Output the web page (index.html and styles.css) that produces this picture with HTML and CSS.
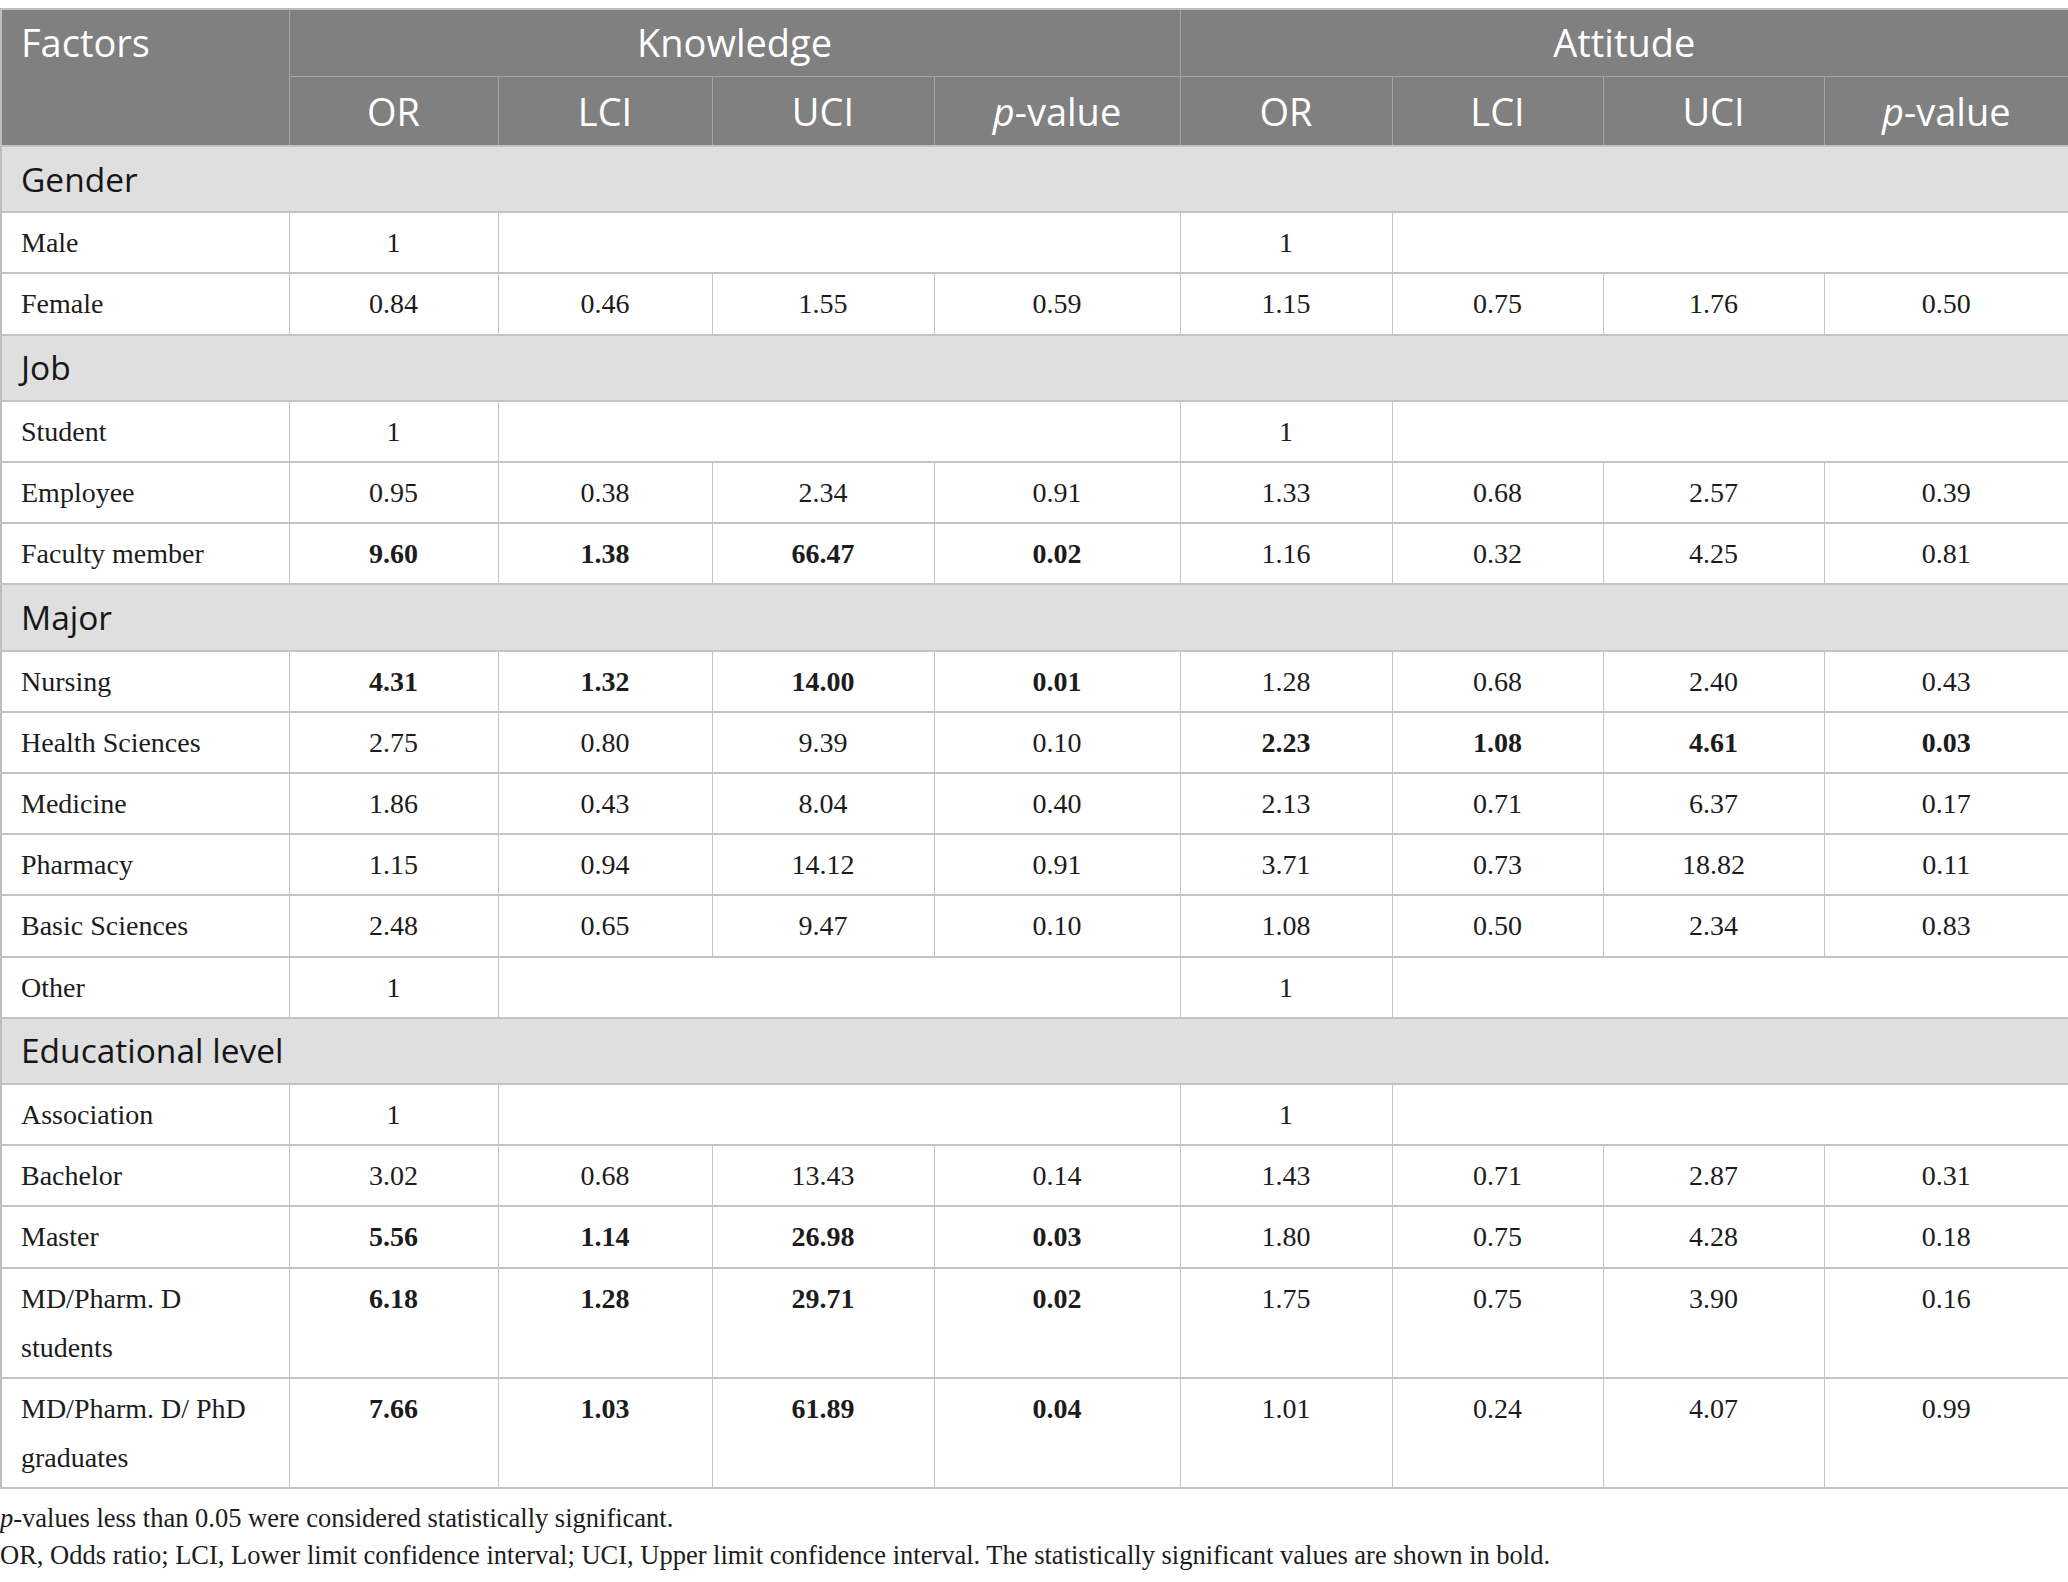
FILE: index.html
```html
<!DOCTYPE html>
<html lang="en">
<head>
<meta charset="utf-8">
<title>Table</title>
<link rel="stylesheet" href="styles.css">
</head>
<body>
<div class="page">
<table class="data">
  <colgroup>
    <col class="c-factor">
    <col class="c-or">
    <col class="c-lci">
    <col class="c-uci">
    <col class="c-p">
    <col class="c-or2">
    <col class="c-lci2">
    <col class="c-uci2">
    <col class="c-p2">
  </colgroup>
  <thead>
    <tr class="h1">
      <th class="factors" rowspan="2">Factors</th>
      <th colspan="4">Knowledge</th>
      <th colspan="4">Attitude</th>
    </tr>
    <tr class="h2">
      <th>OR</th><th>LCI</th><th>UCI</th><th><i>p</i>-value</th>
      <th>OR</th><th>LCI</th><th>UCI</th><th><i>p</i>-value</th>
    </tr>
  </thead>
  <tbody>
    <tr class="group"><td colspan="9">Gender</td></tr>
    <tr><td class="lbl">Male</td><td>1</td><td colspan="3"></td><td>1</td><td colspan="3"></td></tr>
    <tr><td class="lbl">Female</td><td>0.84</td><td>0.46</td><td>1.55</td><td>0.59</td><td>1.15</td><td>0.75</td><td>1.76</td><td>0.50</td></tr>
    <tr class="group"><td colspan="9">Job</td></tr>
    <tr><td class="lbl">Student</td><td>1</td><td colspan="3"></td><td>1</td><td colspan="3"></td></tr>
    <tr><td class="lbl">Employee</td><td>0.95</td><td>0.38</td><td>2.34</td><td>0.91</td><td>1.33</td><td>0.68</td><td>2.57</td><td>0.39</td></tr>
    <tr><td class="lbl">Faculty member</td><td class="b">9.60</td><td class="b">1.38</td><td class="b">66.47</td><td class="b">0.02</td><td>1.16</td><td>0.32</td><td>4.25</td><td>0.81</td></tr>
    <tr class="group"><td colspan="9">Major</td></tr>
    <tr><td class="lbl">Nursing</td><td class="b">4.31</td><td class="b">1.32</td><td class="b">14.00</td><td class="b">0.01</td><td>1.28</td><td>0.68</td><td>2.40</td><td>0.43</td></tr>
    <tr><td class="lbl">Health Sciences</td><td>2.75</td><td>0.80</td><td>9.39</td><td>0.10</td><td class="b">2.23</td><td class="b">1.08</td><td class="b">4.61</td><td class="b">0.03</td></tr>
    <tr><td class="lbl">Medicine</td><td>1.86</td><td>0.43</td><td>8.04</td><td>0.40</td><td>2.13</td><td>0.71</td><td>6.37</td><td>0.17</td></tr>
    <tr><td class="lbl">Pharmacy</td><td>1.15</td><td>0.94</td><td>14.12</td><td>0.91</td><td>3.71</td><td>0.73</td><td>18.82</td><td>0.11</td></tr>
    <tr><td class="lbl">Basic Sciences</td><td>2.48</td><td>0.65</td><td>9.47</td><td>0.10</td><td>1.08</td><td>0.50</td><td>2.34</td><td>0.83</td></tr>
    <tr><td class="lbl">Other</td><td>1</td><td colspan="3"></td><td>1</td><td colspan="3"></td></tr>
    <tr class="group"><td colspan="9">Educational level</td></tr>
    <tr><td class="lbl">Association</td><td>1</td><td colspan="3"></td><td>1</td><td colspan="3"></td></tr>
    <tr><td class="lbl">Bachelor</td><td>3.02</td><td>0.68</td><td>13.43</td><td>0.14</td><td>1.43</td><td>0.71</td><td>2.87</td><td>0.31</td></tr>
    <tr><td class="lbl">Master</td><td class="b">5.56</td><td class="b">1.14</td><td class="b">26.98</td><td class="b">0.03</td><td>1.80</td><td>0.75</td><td>4.28</td><td>0.18</td></tr>
    <tr><td class="lbl">MD/Pharm. D students</td><td class="b">6.18</td><td class="b">1.28</td><td class="b">29.71</td><td class="b">0.02</td><td>1.75</td><td>0.75</td><td>3.90</td><td>0.16</td></tr>
    <tr><td class="lbl">MD/Pharm. D/ PhD graduates</td><td class="b">7.66</td><td class="b">1.03</td><td class="b">61.89</td><td class="b">0.04</td><td>1.01</td><td>0.24</td><td>4.07</td><td>0.99</td></tr>
  </tbody>
</table>
<div class="notes">
  <p><i>p</i>-values less than 0.05 were considered statistically significant.</p>
  <p>OR, Odds ratio; LCI, Lower limit confidence interval; UCI, Upper limit confidence interval. The statistically significant values are shown in bold.</p>
</div>
</div>
</body>
</html>
```

FILE: styles.css
```css
html, body {
  margin: 0;
  padding: 0;
  background: #ffffff;
}

.page {
  padding-top: 8px;
  width: 2068px;
}

.data {
  width: 2068px;
  border-collapse: collapse;
  table-layout: fixed;
  border: 2px solid #bdbdbd;
}

.c-factor { width: 288px; }
.c-or { width: 209px; }
.c-lci { width: 214px; }
.c-uci { width: 222px; }
.c-p { width: 246px; }
.c-or2 { width: 212px; }
.c-lci2 { width: 211px; }
.c-uci2 { width: 221px; }
.c-p2 { width: 245px; }

.data th {
  background: #7f807f;
  color: #ffffff;
  font-family: "Open Sans", "Noto Sans", sans-serif;
  font-weight: 400;
  font-size: 38px;
  line-height: 49px;
  text-align: center;
  border: 1px solid #a4a5a4;
  padding: 0 10px;
}

.data .h1 th {
  padding-top: 8px;
  padding-bottom: 9px;
}

.data .h2 th {
  padding-top: 9.5px;
  padding-bottom: 9.5px;
}

.data th.factors {
  text-align: left;
  vertical-align: top;
  padding-left: 19px;
}

.data td {
  font-family: "Liberation Serif", "Times New Roman", serif;
  font-size: 28px;
  line-height: 49.2px;
  color: #1c1c1c;
  text-align: center;
  vertical-align: top;
  padding: 5px 20px 5px 20px;
  border-top: 2px solid #c3c3c3;
  border-bottom: 2px solid #c3c3c3;
  border-left: 1px solid #c3c3c3;
  border-right: 1px solid #c3c3c3;
}

.data td.lbl {
  text-align: left;
  padding-left: 19px;
}

.data td.b {
  font-weight: 700;
}

.data tr.group td {
  background: #e0dfe0;
  font-family: "Open Sans", "Noto Sans", sans-serif;
  font-size: 33.5px;
  line-height: 49.2px;
  color: #161616;
  text-align: left;
  padding: 7.5px 19px 7.5px 19px;
}

.notes {
  margin-top: 11px;
  font-family: "Liberation Serif", "Times New Roman", serif;
  font-size: 26.5px;
  line-height: 37px;
  color: #1c1c1c;
}

.notes p {
  margin: 0;
}
```
